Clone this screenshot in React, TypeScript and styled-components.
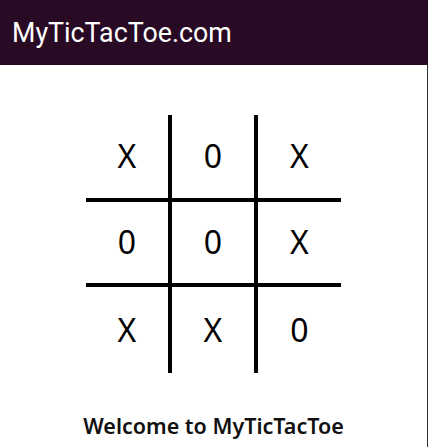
import styled, { createGlobalStyle } from 'styled-components'

const GlobalStyle = createGlobalStyle`
  html, body {
    margin: 0;
    padding: 0;
    background: #ffffff;
  }
`

const board = ['X', '0', 'X', '0', '0', 'X', 'X', 'X', '0']

const App = () => {
  return (
    <>
      <GlobalStyle />
      <Page>
        <Header>
          <Brand>MyTicTacToe.com</Brand>
        </Header>
        <Main>
          <Board>
            {board.map((mark, i) => (
              <Cell key={i} $col={i % 3} $row={Math.floor(i / 3)}>
                {mark}
              </Cell>
            ))}
          </Board>
          <Welcome>Welcome to MyTicTacToe</Welcome>
        </Main>
      </Page>
    </>
  )
}

const Page = styled.div`
  width: 428px;
  height: 447px;
  display: flex;
  flex-direction: column;
  overflow: hidden;
`

const Header = styled.header`
  height: 65px;
  flex-shrink: 0;
  background-color: #290a24;
  display: flex;
  align-items: center;
  padding: 0 12px;
`

const Brand = styled.h1`
  margin: 0;
  color: #ffffff;
  font-family: Roboto, 'Liberation Sans', sans-serif;
  font-weight: 400;
  font-size: 26.8px;
`

const Main = styled.main`
  flex: 1;
  width: 427px;
  border-right: 1px solid #2e2e2e;
  display: flex;
  flex-direction: column;
  align-items: center;
  padding-top: 50px;
`

const Board = styled.div`
  display: grid;
  grid-template-columns: 86px 86px 83px;
  grid-template-rows: 87px 85px 86px;
`

const Cell = styled.div<{ $col: number; $row: number }>`
  display: flex;
  align-items: center;
  justify-content: center;
  font-family: 'Noto Sans', 'DejaVu Sans', sans-serif;
  font-size: 32px;
  color: #000000;
  border-right: ${(p) => (p.$col < 2 ? '4px solid #000' : 'none')};
  border-bottom: ${(p) => (p.$row < 2 ? '4px solid #000' : 'none')};
  padding-bottom: 2px;
`

const Welcome = styled.h2`
  margin: 38px 0 0;
  font-family: 'Noto Sans', 'Open Sans', sans-serif;
  font-weight: 600;
  font-size: 21.5px;
  color: #111111;
`

export default App
